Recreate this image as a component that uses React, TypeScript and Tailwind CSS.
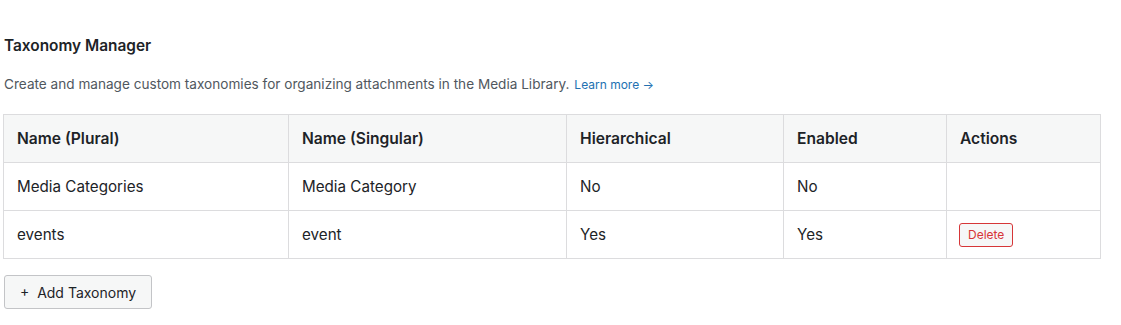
import React from 'react';

const rows = [
  { plural: 'Media Categories', singular: 'Media Category', hierarchical: 'No', enabled: 'No', deletable: false },
  { plural: 'events', singular: 'event', hierarchical: 'Yes', enabled: 'Yes', deletable: true },
];

const cols = [
  { label: 'Name (Plural)', w: 'w-[285px]' },
  { label: 'Name (Singular)', w: 'w-[278px]' },
  { label: 'Hierarchical', w: 'w-[217px]' },
  { label: 'Enabled', w: 'w-[163px]' },
  { label: 'Actions', w: '' },
];

export default function App() {
  return (
    <div className="min-h-[325px] bg-white pl-[3px] pt-[36px] text-[#1d2327] font-['Inter','Liberation_Sans',sans-serif]">
      <h2 className="text-[15.4px] font-semibold leading-[20px] pl-[1px]">Taxonomy Manager</h2>
      <p className="mt-[19px] pl-[1px] text-[13.6px] leading-[18px] text-[#50575e]">
        Create and manage custom taxonomies for organizing attachments in the Media Library.{' '}
        <a href="#" className="ml-[1px] text-[12px] text-[#2271b1] no-underline">Learn more →</a>
      </p>

      <table className="mt-[20px] w-[1098px] border-collapse text-[15.2px] leading-[20px]">
        <thead>
          <tr className="bg-[#f6f7f7] h-[48px]">
            {cols.map((c) => (
              <th key={c.label} className={`${c.w} border border-[#dcdcde] px-[13px] text-left text-[15.6px] font-semibold`}>
                {c.label}
              </th>
            ))}
          </tr>
        </thead>
        <tbody>
          {rows.map((r) => (
            <tr key={r.plural} className="h-[48px]">
              <td className="border border-[#dcdcde] px-[13px]">{r.plural}</td>
              <td className="border border-[#dcdcde] px-[13px]">{r.singular}</td>
              <td className="border border-[#dcdcde] px-[13px]">{r.hierarchical}</td>
              <td className="border border-[#dcdcde] px-[13px]">{r.enabled}</td>
              <td className="border border-[#dcdcde] px-[12px]">
                {r.deletable && (
                  <button className="h-[24px] rounded-[3px] border border-[#d63638] bg-[#f6f7f7] px-[8px] text-[12px] leading-[20px] text-[#d63638]">
                    Delete
                  </button>
                )}
              </td>
            </tr>
          ))}
        </tbody>
      </table>

      <button className="mt-[16px] ml-[1px] h-[34px] rounded-[3px] border border-[#c3c4c7] bg-[#f6f7f7] px-[15px] text-[14px] text-[#1d2327]">
        +&nbsp; Add Taxonomy
      </button>
    </div>
  );
}
